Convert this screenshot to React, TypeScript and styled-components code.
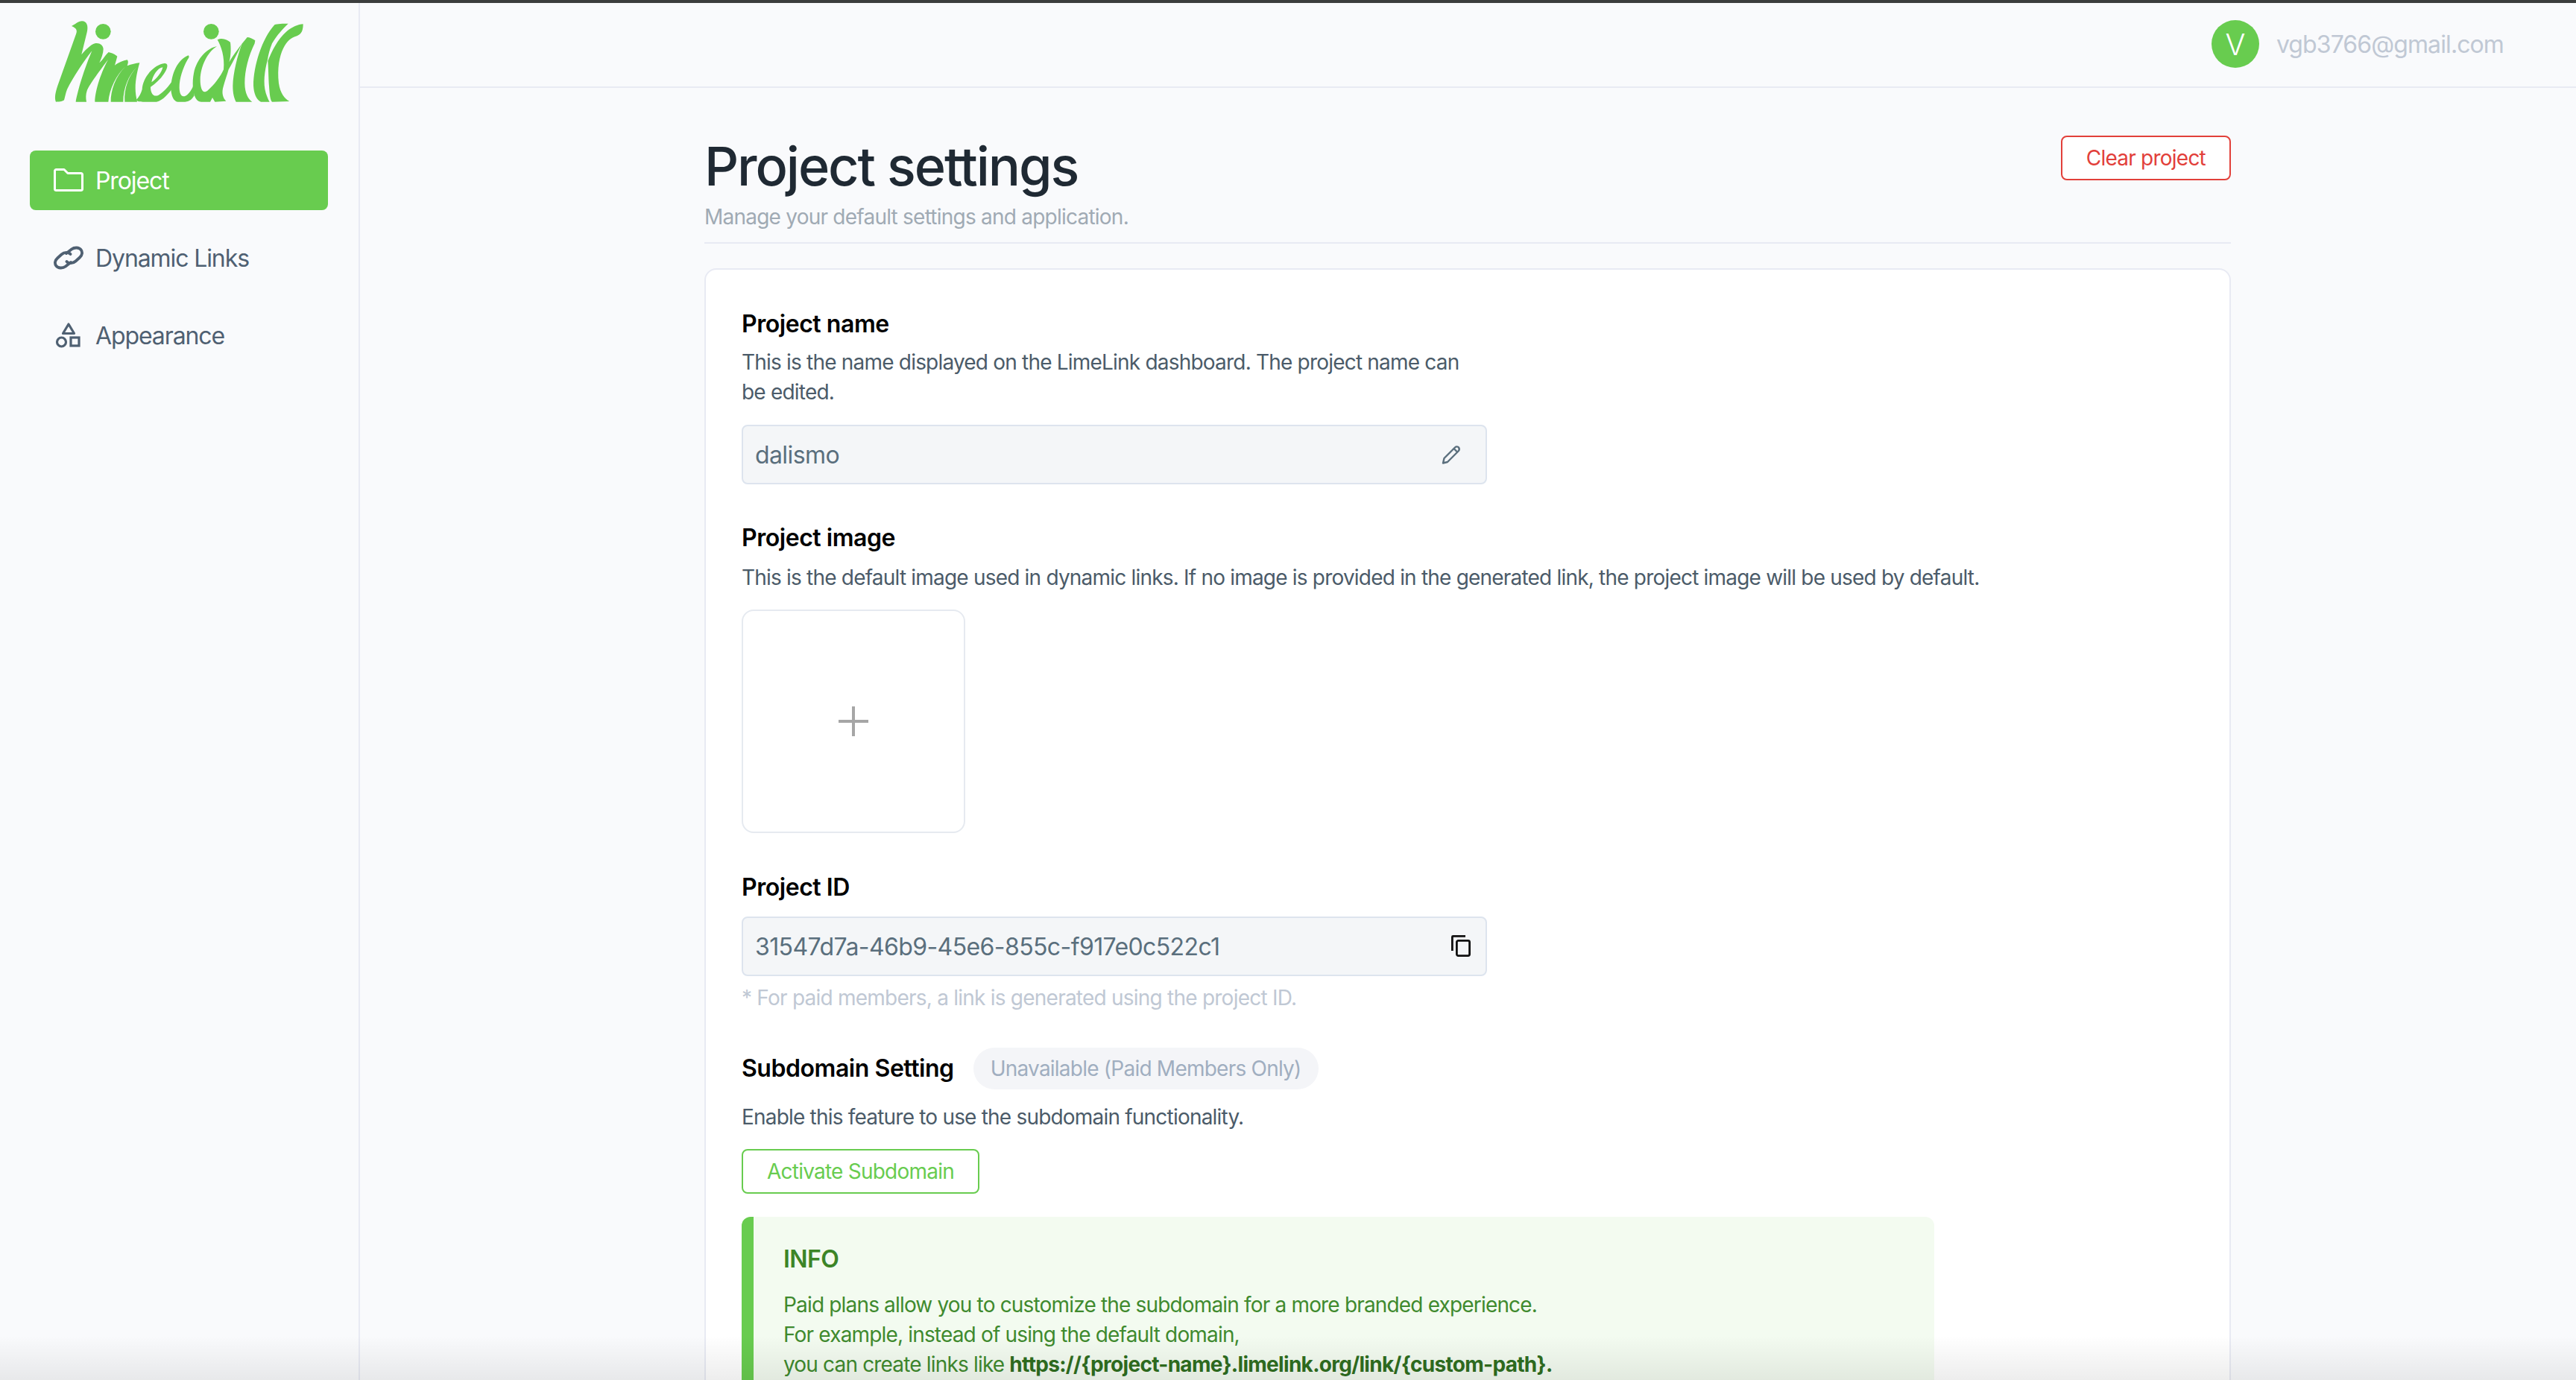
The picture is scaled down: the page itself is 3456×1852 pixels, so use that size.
import { ReactElement } from 'react';
import styled, { createGlobalStyle } from 'styled-components';

const GREEN = '#68cc4f';
const RED = '#e2403a';

const GlobalStyle = createGlobalStyle`
  html, body {
    margin: 0;
    padding: 0;
    height: 100%;
    overflow: hidden;
    background: #f9fafc;
    font-family: Inter, 'Liberation Sans', sans-serif;
  }
  * { box-sizing: border-box; }
`;

const Page = styled.div`
  position: relative;
  height: 100vh;
  display: flex;
  flex-direction: column;
  overflow: hidden;
  border-top: 4px solid #3b3d3d;
`;

const BottomShade = styled.div`
  position: absolute;
  left: 0;
  right: 0;
  bottom: 0;
  height: 60px;
  pointer-events: none;
  background: linear-gradient(to bottom, rgba(0, 0, 0, 0), rgba(0, 0, 0, 0.07));
`;

const Body = styled.div`
  flex: 1;
  display: flex;
  min-height: 0;
`;

const Sidebar = styled.aside`
  width: 483px;
  flex-shrink: 0;
  border-right: 2px solid #e8eaf3;
  padding: 21px 40px 0;
`;

const LogoBox = styled.div`
  height: 177px;
  padding-left: 30px;
`;

const Nav = styled.nav`
  width: 400px;
  display: flex;
  flex-direction: column;
  gap: 24px;
`;

const NavItem = styled.div<{ $active?: boolean }>`
  height: 80px;
  display: flex;
  align-items: center;
  gap: 16px;
  padding-left: 32px;
  border-radius: 8px;
  font-size: 32px;
  letter-spacing: -1.1px;
  color: ${({ $active }) => ($active ? '#fff' : '#4f6072')};
  background: ${({ $active }) => ($active ? GREEN : 'transparent')};
`;

const NavIcon = styled.svg`
  width: 40px;
  height: 40px;
  flex-shrink: 0;
`;

const Main = styled.div`
  flex: 1;
  min-width: 0;
  display: flex;
  flex-direction: column;
`;

const Header = styled.header`
  height: 114px;
  flex-shrink: 0;
  border-bottom: 2px solid #e8eaf3;
  display: flex;
  justify-content: flex-end;
  align-items: center;
  gap: 23px;
  padding: 0 97px 2px 0;
`;

const Avatar = styled.div`
  width: 64px;
  height: 64px;
  border-radius: 50%;
  background: ${GREEN};
  color: #fff;
  font-size: 40px;
  font-weight: 300;
  display: flex;
  align-items: center;
  justify-content: center;
`;

const Email = styled.span`
  font-size: 32px;
  letter-spacing: -0.9px;
  color: #c0c8d4;
`;

const Content = styled.main`
  width: 2048px;
  margin-left: 462px;
  padding-top: 64px;
`;

const TitleBar = styled.div`
  display: flex;
  justify-content: space-between;
  align-items: flex-start;
  padding-bottom: 14px;
  border-bottom: 2px solid #e8eaf3;
  margin-bottom: 33px;
`;

const Title = styled.h1`
  margin: 1px 0 8px;
  font-size: 72px;
  line-height: 80px;
  font-weight: 500;
  letter-spacing: -2.1px;
  color: #1f2933;
`;

const Subtitle = styled.p`
  margin: 0;
  font-size: 28px;
  line-height: 40px;
  letter-spacing: -0.77px;
  color: #a0aab4;
`;

const OutlineButton = styled.button<{ $color: string }>`
  display: block;
  height: 60px;
  padding: 0 32px;
  background: #fff;
  border: 2px solid ${({ $color }) => $color};
  border-radius: 8px;
  color: ${({ $color }) => $color};
  font-family: inherit;
  font-size: 28px;
  letter-spacing: -0.77px;
`;

const Card = styled.section`
  background: #fff;
  border: 2px solid #e8eaf3;
  border-radius: 16px;
  padding: 53px 48px 60px;
`;

const Heading = styled.h2<{ $mb: number }>`
  margin: 0 0 ${({ $mb }) => $mb}px;
  font-size: 32px;
  line-height: 40px;
  font-weight: 600;
  letter-spacing: -0.45px;
  color: #000;
`;

const Description = styled.p<{ $mb: number; $width?: number }>`
  margin: 0 0 ${({ $mb }) => $mb}px;
  font-size: 28px;
  line-height: 40px;
  letter-spacing: -0.8px;
  color: #4b5b69;
  max-width: ${({ $width }) => ($width ? `${$width}px` : 'none')};
`;

const Field = styled.div<{ $mb: number }>`
  width: 1000px;
  height: 80px;
  margin-bottom: ${({ $mb }) => $mb}px;
  display: flex;
  align-items: center;
  justify-content: space-between;
  padding: 0 16px;
  background: #f4f6f8;
  border: 2px solid #dde4ee;
  border-radius: 8px;
  font-size: 32px;
  letter-spacing: -0.6px;
  color: #5a6f7d;
`;

const ImageBox = styled.div`
  width: 300px;
  height: 300px;
  margin-bottom: 53px;
  display: flex;
  align-items: center;
  justify-content: center;
  border: 2px solid #e6eaf0;
  border-radius: 16px;
`;

const Hint = styled.p`
  margin: 9px 0 47px;
  font-size: 28px;
  line-height: 40px;
  letter-spacing: -0.77px;
  color: #c0c8d4;
`;

const SubdomainRow = styled.div`
  display: flex;
  align-items: center;
  gap: 26px;
  margin-bottom: 17px;
`;

const Pill = styled.span`
  height: 56px;
  display: flex;
  align-items: center;
  padding: 0 23px;
  border-radius: 28px;
  background: #f4f5f8;
  font-size: 28px;
  letter-spacing: -0.77px;
  color: #a0aec0;
`;

const InfoBox = styled.div`
  width: 1600px;
  margin-top: 31px;
  padding: 37px 40px 40px;
  background: #f3fbf0;
  border-left: 16px solid ${GREEN};
  border-radius: 12px;
`;

const InfoTitle = styled.div`
  font-size: 32px;
  line-height: 40px;
  font-weight: 600;
  letter-spacing: -0.55px;
  color: #3c8527;
  margin-bottom: 21px;
`;

const InfoText = styled.p`
  margin: 0;
  font-size: 28px;
  line-height: 40px;
  letter-spacing: -0.83px;
  color: #3f8a2e;

  b {
    font-weight: 700;
    letter-spacing: -0.7px;
    color: #2f6e1f;
  }
`;

const Logo = (): ReactElement => (
  <svg width="340" height="115" viewBox="0 0 1020 345" fill={GREEN} fillRule="evenodd">
    <circle cx="205" cy="52" r="31" />
    <circle cx="640" cy="52" r="31" />
    {/* l, i, m */}
    <path d="M15 335C8 318 14 295 22 270L96 62C102 48 98 38 78 30C92 24 105 10 120 10C140 10 146 30 140 55L118 145C135 125 155 105 172 100C188 96 205 105 206 122C206 140 198 160 190 178C205 165 215 145 227 135C240 138 255 145 262 152L252 188C270 175 285 170 302 166C308 172 305 182 302 190C320 183 335 180 352 178C344 205 335 245 335 280C335 300 338 315 342 335L292 335C288 280 310 225 342 195C308 225 286 280 286 335L236 335C235 290 255 230 296 192C258 225 230 285 226 335L172 335C172 300 190 230 225 165C195 205 150 265 140 290C135 305 135 320 138 335L95 335C100 305 120 225 160 130C125 175 85 235 60 285C54 300 52 315 48 328C40 335 25 335 15 335Z" />
    {/* e */}
    <path d="M338 328C350 315 358 300 362 285C365 235 410 185 452 180C472 178 462 205 450 222C435 245 415 262 396 275C396 300 408 318 428 308C448 298 470 270 485 250L488 275C470 300 445 330 420 335L365 335C352 335 345 335 338 328ZM400 256C420 243 442 215 445 196C425 198 405 228 400 256Z" />
    {/* first bowl */}
    <path d="M548 148C552 150 552 158 545 165C525 200 511 245 512 280C513 310 525 322 545 305C555 295 562 285 568 270L572 310C565 320 555 335 535 335L505 335C490 335 478 310 478 280C480 220 505 165 548 148Z" />
    {/* second bowl and n */}
    <path d="M663 112C625 118 582 160 570 220C563 255 566 295 575 315C580 328 590 335 600 335L636 335L645 318L655 335L700 332C688 320 680 300 690 270C695 250 705 225 710 205C730 170 750 130 765 98C745 150 728 220 727 270C727 300 732 320 740 335L805 335C790 325 775 300 775 260C775 210 790 150 815 100L817 88C805 80 795 75 785 75C760 105 730 145 712 175C720 150 720 115 717 95C705 85 685 75 665 85C680 110 695 155 690 205C680 230 650 270 625 290C605 305 596 280 596 245C598 190 625 135 663 112Z" />
    {/* k */}
    <path d="M895 25C905 20 930 20 950 20C930 40 905 65 885 100C875 125 870 145 867 165C855 210 848 260 860 300C865 315 870 328 875 335L840 335C820 325 812 300 810 270C810 190 845 80 895 25Z" />
    <path d="M1010 22C1010 45 1005 62 985 70C960 78 945 90 930 120C915 150 905 200 912 260C918 300 935 322 955 333L885 335C875 325 875 290 872 260C870 220 870 195 868 170C885 130 905 85 945 50C965 35 990 22 1010 22Z" />
  </svg>
);

const FolderIcon = (): ReactElement => (
  <NavIcon viewBox="0 0 40 40" fill="none" stroke="currentColor" strokeWidth="3" strokeLinejoin="round">
    <path d="M1.500 7.500a2 2 0 0 1 2-2h10.500l5 5h17.500a2 2 0 0 1 2 2v19a2 2 0 0 1-2 2h-33a2 2 0 0 1-2-2z" />
  </NavIcon>
);

const LinkIcon = (): ReactElement => (
  <NavIcon viewBox="0 0 40 40" fill="none" stroke="currentColor" strokeWidth="3.800" strokeLinecap="round">
    <path d="M17 14l7-5.500c4-3 10-2.500 12.500 0.500s2 7.500-1.500 10.500l-5.500 5c-4 3.500-9.500 3.500-12 0.500" />
    <path d="M23 26l-7 5.500c-4 3-10 2.500-12.500-0.500s-2-7.500 1.500-10.500l5.500-5c4-3.500 9.500-3.500 12-0.500" />
  </NavIcon>
);

const ShapesIcon = (): ReactElement => (
  <NavIcon viewBox="0 0 40 40" fill="none" stroke="currentColor" strokeWidth="3.200">
    <path d="M20 5l7.500 12.500h-15z" strokeLinejoin="round" />
    <circle cx="10.500" cy="29" r="6" />
    <rect x="23" y="23" width="11" height="11" />
  </NavIcon>
);

const SmallIcon = styled.svg<{ $mr?: number }>`
  width: 32px;
  height: 32px;
  flex-shrink: 0;
  margin-right: ${({ $mr }) => $mr ?? 0}px;
`;

const PencilIcon = (): ReactElement => (
  <SmallIcon $mr={16} viewBox="0 0 32 32" fill="none" stroke="#5a6f7d" strokeWidth="2.400" strokeLinejoin="round">
    <path d="M7 27.500l1.500-6.500L23 6.500c1.500-1.500 4-1.500 5 0s1 3.500-0.500 5L13 26z" />
    <path d="M21.500 8l5 5" />
  </SmallIcon>
);

const CopyIcon = (): ReactElement => (
  <SmallIcon viewBox="0 0 32 32" fill="none" stroke="#111" strokeWidth="2.800">
    <path d="M21 2.400H4.400a1 1 0 0 0-1 1V22" />
    <rect x="9.400" y="8.400" width="17.200" height="20.200" rx="2" />
  </SmallIcon>
);

const PlusIcon = (): ReactElement => (
  <svg width="44" height="44" viewBox="0 0 44 44" stroke="#a6a6a6" strokeWidth="4">
    <path d="M22 2v40M2 22h40" />
  </svg>
);

const App = (): ReactElement => (
  <Page>
    <GlobalStyle />
    <Body>
      <Sidebar>
        <LogoBox>
          <Logo />
        </LogoBox>
        <Nav>
          <NavItem $active>
            <FolderIcon />
            Project
          </NavItem>
          <NavItem>
            <LinkIcon />
            Dynamic Links
          </NavItem>
          <NavItem>
            <ShapesIcon />
            Appearance
          </NavItem>
        </Nav>
      </Sidebar>
      <Main>
        <Header>
          <Avatar>V</Avatar>
          <Email>vgb3766@gmail.com</Email>
        </Header>
        <Content>
          <TitleBar>
            <div>
              <Title>Project settings</Title>
              <Subtitle>Manage your default settings and application.</Subtitle>
            </div>
            <OutlineButton $color={RED}>Clear project</OutlineButton>
          </TitleBar>
          <Card>
            <Heading $mb={11}>Project name</Heading>
            <Description $mb={24} $width={1000}>
              This is the name displayed on the LimeLink dashboard. The project name can be edited.
            </Description>
            <Field $mb={52}>
              dalismo
              <PencilIcon />
            </Field>
            <Heading $mb={13}>Project image</Heading>
            <Description $mb={23}>
              This is the default image used in dynamic links. If no image is provided in the generated link, the project image will be used by default.
            </Description>
            <ImageBox>
              <PlusIcon />
            </ImageBox>
            <Heading $mb={19}>Project ID</Heading>
            <Field $mb={0}>
              31547d7a-46b9-45e6-855c-f917e0c522c1
              <CopyIcon />
            </Field>
            <Hint>* For paid members, a link is generated using the project ID.</Hint>
            <SubdomainRow>
              <Heading $mb={0}>Subdomain Setting</Heading>
              <Pill>Unavailable (Paid Members Only)</Pill>
            </SubdomainRow>
            <Description $mb={23}>Enable this feature to use the subdomain functionality.</Description>
            <OutlineButton $color={GREEN}>Activate Subdomain</OutlineButton>
            <InfoBox>
              <InfoTitle>INFO</InfoTitle>
              <InfoText>Paid plans allow you to customize the subdomain for a more branded experience.</InfoText>
              <InfoText>For example, instead of using the default domain,</InfoText>
              <InfoText>
                you can create links like <b>https://{'{project-name}'}.limelink.org/link/{'{custom-path}'}.</b>
              </InfoText>
            </InfoBox>
          </Card>
        </Content>
      </Main>
    </Body>
    <BottomShade />
  </Page>
);

export default App;
